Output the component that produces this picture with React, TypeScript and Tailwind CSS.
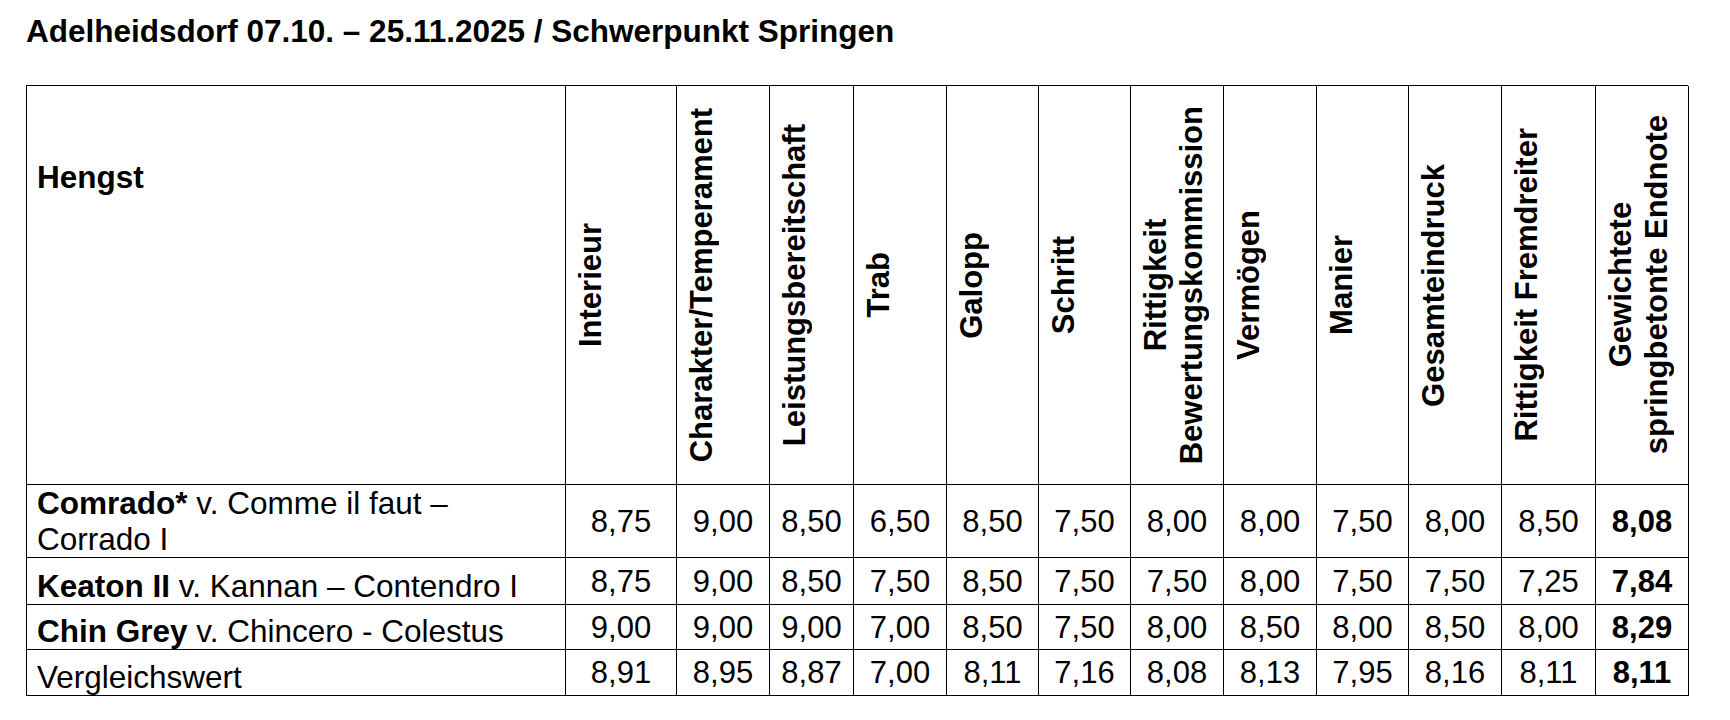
import type { ReactNode } from "react";

const headers: string[][] = [
  ["Interieur"],
  ["Charakter/Temperament"],
  ["Leistungsbereitschaft"],
  ["Trab"],
  ["Galopp"],
  ["Schritt"],
  ["Rittigkeit", "Bewertungskommission"],
  ["Vermögen"],
  ["Manier"],
  ["Gesamteindruck"],
  ["Rittigkeit Fremdreiter"],
  ["Gewichtete", "springbetonte Endnote"],
];

type Row = { name: ReactNode; values: string[] };

const rows: Row[] = [
  {
    name: (
      <>
        <b>Comrado*</b> v. Comme il faut –<br />
        Corrado I
      </>
    ),
    values: ["8,75", "9,00", "8,50", "6,50", "8,50", "7,50", "8,00", "8,00", "7,50", "8,00", "8,50", "8,08"],
  },
  {
    name: (
      <>
        <b>Keaton II</b> v. Kannan – Contendro I
      </>
    ),
    values: ["8,75", "9,00", "8,50", "7,50", "8,50", "7,50", "7,50", "8,00", "7,50", "7,50", "7,25", "7,84"],
  },
  {
    name: (
      <>
        <b>Chin Grey</b> v. Chincero - Colestus
      </>
    ),
    values: ["9,00", "9,00", "9,00", "7,00", "8,50", "7,50", "8,00", "8,50", "8,00", "8,50", "8,00", "8,29"],
  },
  {
    name: <>Vergleichswert</>,
    values: ["8,91", "8,95", "8,87", "7,00", "8,11", "7,16", "8,08", "8,13", "7,95", "8,16", "8,11", "8,11"],
  },
];

const App = () => {
  return (
    <div className="min-h-screen bg-white pt-[13px] pl-[26px] text-black font-['Liberation_Sans',Arial,sans-serif] text-[31px]">
      <h1 className="font-bold text-[31.5px] leading-[36px] whitespace-nowrap">
        Adelheidsdorf 07.10. – 25.11.2025 / Schwerpunkt Springen
      </h1>

      <div className="mt-[36px] grid w-[1662px] grid-cols-[539px_111px_93px_84px_93px_92px_92px_93px_93px_92px_93px_94px_93px] grid-rows-[399px_73px_47px_45px_46px] border-l border-t border-black">
        {/* header row */}
        <div className="border-r border-b border-black pt-[73px] pl-[10px] font-bold text-[31.5px] leading-[36px]">
          Hengst
        </div>
        {headers.map((lines, i) => (
          <div key={i} className="flex items-center border-r border-b border-black pl-[7px]">
            <span className="rotate-180 whitespace-nowrap text-center font-bold leading-[36px] [writing-mode:vertical-rl]">
              {lines.map((l, j) => (
                <span key={j}>
                  {j > 0 && <br />}
                  {l}
                </span>
              ))}
            </span>
          </div>
        ))}

        {/* data rows */}
        {rows.map((row, r) => (
          <div key={r} className="contents">
            <div className="flex items-end border-r border-b border-black pl-[10px] text-[31.5px] leading-[36px] whitespace-nowrap">
              <div>{row.name}</div>
            </div>
            {row.values.map((v, c) => (
              <div
                key={c}
                className={
                  c === row.values.length - 1
                    ? "flex items-center justify-center border-r border-b border-black font-bold leading-[37px]"
                    : "flex items-center justify-center border-r border-b border-black leading-[37px]"
                }
              >
                {v}
              </div>
            ))}
          </div>
        ))}
      </div>
    </div>
  );
};

export default App;
